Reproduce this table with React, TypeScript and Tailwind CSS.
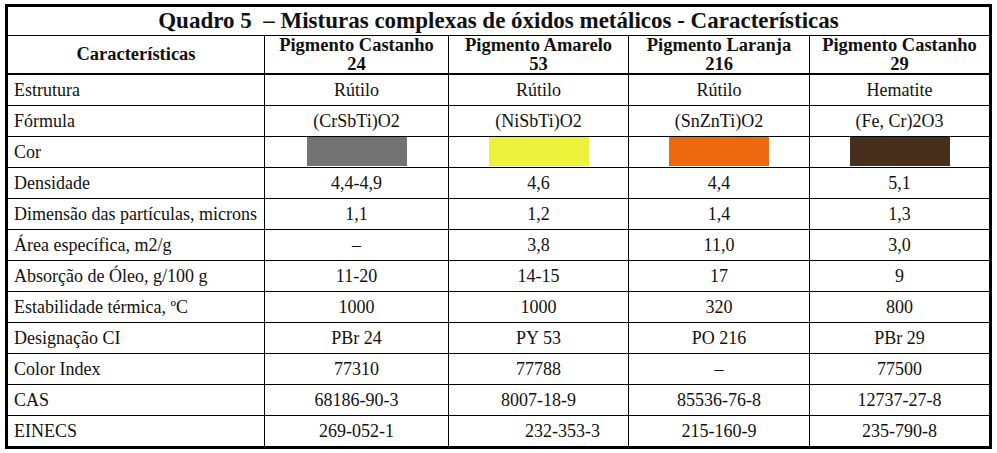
const HEADERS = [
  ["Pigmento Castanho", "24"],
  ["Pigmento Amarelo", "53"],
  ["Pigmento Laranja", "216"],
  ["Pigmento Castanho", "29"],
];

const SWATCHES = ["bg-[#737373]", "bg-[#ebf43a]", "bg-[#ee690d]", "bg-[#46301c]"];

const ROWS: { label: string; values: string[] }[] = [
  { label: "Estrutura", values: ["Rútilo", "Rútilo", "Rútilo", "Hematite"] },
  { label: "Fórmula", values: ["(CrSbTi)O2", "(NiSbTi)O2", "(SnZnTi)O2", "(Fe, Cr)2O3"] },
  { label: "Cor", values: [] },
  { label: "Densidade", values: ["4,4-4,9", "4,6", "4,4", "5,1"] },
  { label: "Dimensão das partículas, microns", values: ["1,1", "1,2", "1,4", "1,3"] },
  { label: "Área específica, m2/g", values: ["–", "3,8", "11,0", "3,0"] },
  { label: "Absorção de Óleo, g/100 g", values: ["11-20", "14-15", "17", "9"] },
  { label: "Estabilidade térmica, ºC", values: ["1000", "1000", "320", "800"] },
  { label: "Designação CI", values: ["PBr 24", "PY 53", "PO 216", "PBr 29"] },
  { label: "Color Index", values: ["77310", "77788", "–", "77500"] },
  { label: "CAS", values: ["68186-90-3", "8007-18-9", "85536-76-8", "12737-27-8"] },
  { label: "EINECS", values: ["269-052-1", "232-353-3", "215-160-9", "235-790-8"] },
];

export default function App() {
  return (
    <div className="h-[453px] w-[997px] bg-white pl-[5px] pt-[4px] font-['Liberation_Serif',serif] text-[#111]">
      <div className="w-[987px] border-[3px] border-black">
        {/* title */}
        <div className="flex h-[29px] items-center justify-center border-b border-black text-[23px] font-bold">
          Quadro 5&nbsp; – Misturas complexas de óxidos metálicos - Características
        </div>

        {/* header row */}
        <div className="grid h-[39px] grid-cols-[256px_184px_180px_181px_180px] border-b-2 border-black text-[18.5px] font-bold">
          <div className="flex items-center justify-center">Características</div>
          {HEADERS.map((h, i) => (
            <div key={i} className="border-l border-black text-center leading-[18.5px]">
              <div>{h[0]}</div>
              <div>{h[1]}</div>
            </div>
          ))}
        </div>

        {/* data rows */}
        {ROWS.map((row, r) => (
          <div
            key={row.label}
            className={
              r === ROWS.length - 1
                ? "grid h-[30px] grid-cols-[256px_184px_180px_181px_180px] text-[18px]"
                : "grid h-[31px] grid-cols-[256px_184px_180px_181px_180px] border-b border-black text-[18px]"
            }
          >
            <div className="flex items-center pl-[6px]">{row.label}</div>
            {row.label === "Cor"
              ? SWATCHES.map((c, i) => (
                  <div key={i} className="flex items-start justify-center border-l border-black">
                    <div className={`h-[29px] w-[100px] ${c}`} />
                  </div>
                ))
              : row.values.map((v, i) => (
                  <div
                    key={i}
                    className={
                      row.label === "EINECS" && i === 1
                        ? "flex items-center justify-center border-l border-black pl-[48px]"
                        : "flex items-center justify-center border-l border-black"
                    }
                  >
                    {v}
                  </div>
                ))}
          </div>
        ))}
      </div>
    </div>
  );
}
